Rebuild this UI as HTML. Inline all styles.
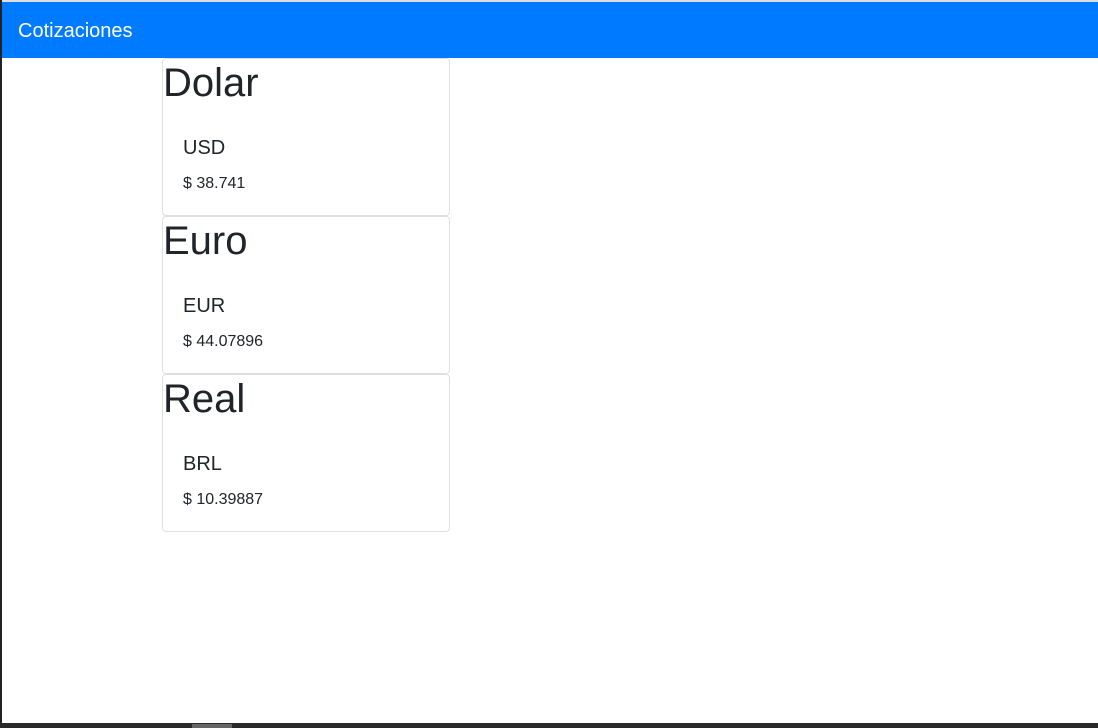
<!DOCTYPE html>
<html><head><style>
body{margin:0;width:1098px;height:728px;overflow:hidden;background:#fff;font-family:"Liberation Sans",sans-serif;color:#212529;position:relative}
.lb{position:absolute;left:0;top:0;width:2px;height:728px;background:#222}
.tb{position:absolute;left:0;top:0;width:1098px;height:2px;background:#ddd}
.bb{position:absolute;left:0;top:723px;width:1098px;height:5px;background:#2a2a2a}
.bb i{position:absolute;left:192px;top:1px;width:40px;height:4px;background:#666}
.nav{position:absolute;left:2px;top:2px;right:0;height:56px;background:#007bff;color:#fff;font-size:20px;line-height:58px;padding-left:16px;box-sizing:border-box}
.card{position:absolute;left:162px;width:288px;height:158px;border:1px solid rgba(0,0,0,.125);border-radius:4px;box-sizing:border-box}
.card h1{margin:0;font-size:40px;font-weight:400;line-height:48px;position:absolute;left:0;top:0}
.card h5{margin:0;font-size:20px;font-weight:400;position:absolute;left:20px;top:77px;line-height:24px}
.card p{margin:0;font-size:16px;position:absolute;left:20px;top:115px;line-height:20px}
</style></head><body>
<div class="tb"></div>
<div class="nav">Cotizaciones</div>
<div class="card" style="top:58px"><h1>Dolar</h1><h5>USD</h5><p>$ 38.741</p></div>
<div class="card" style="top:216px"><h1>Euro</h1><h5>EUR</h5><p>$ 44.07896</p></div>
<div class="card" style="top:374px"><h1>Real</h1><h5>BRL</h5><p>$ 10.39887</p></div>
<div class="lb"></div>
<div class="bb"><i></i></div>
</body></html>
